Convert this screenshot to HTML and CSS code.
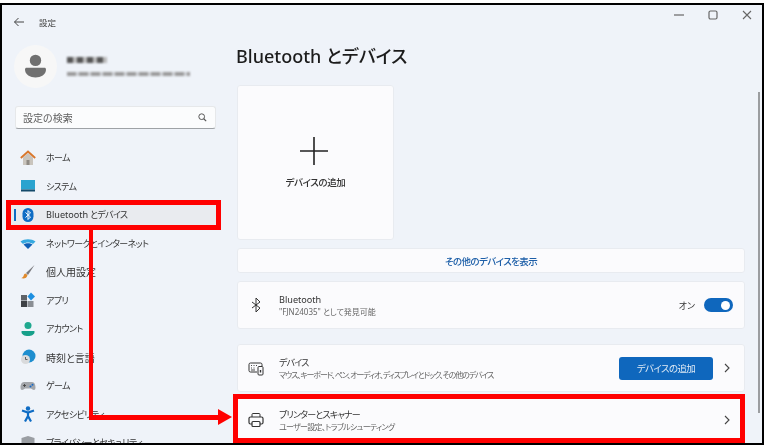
FILE: index.html
```html
<!DOCTYPE html>
<html lang="ja">
<head>
    <meta charset="UTF-8">
    <meta name="viewport" content="width=device-width, initial-scale=1.0">
    <title>設定</title>
    <link rel="stylesheet" href="styles.css">
</head>
<body>
    <div class="window">
        <div class="titlebar">
            <svg class="back" width="12" height="12" viewBox="0 0 12 12"><path d="M11 6H1.500M5.500 2 1.500 6l4 4" fill="none" stroke="#444" stroke-width="1"/></svg>
            <span class="app-name">設定</span>
            <div class="controls">
                <svg width="12" height="12" viewBox="0 0 12 12"><path d="M1 6h10" stroke="#666" stroke-width="1.200"/></svg>
                <svg width="12" height="12" viewBox="0 0 12 12"><rect x="2" y="2" width="8" height="8" rx="1.500" fill="none" stroke="#666" stroke-width="1.200"/></svg>
                <svg width="12" height="12" viewBox="0 0 12 12"><path d="M2 2l8 8M10 2l-8 8" stroke="#666" stroke-width="1.100"/></svg>
            </div>
        </div>
        <div class="content">
            <aside class="sidebar">
                <div class="profile">
                    <div class="avatar">
                        <svg width="24" height="28" viewBox="0 0 24 28"><circle cx="12" cy="7" r="6.500" fill="#707070"/><path d="M1 15.500h22c0 0 1 1 1 2 0 6-6 9-12 9S0 23.500 0 17.500c0-1 1-2 1-2z" fill="#707070"/></svg>
                    </div>
                    <div class="account">
                        <div class="blur-name"></div>
                        <div class="blur-mail"></div>
                    </div>
                </div>
                <div class="search">
                    <span>設定の検索</span>
                    <svg width="9" height="9" viewBox="0 0 11 11"><circle cx="4.500" cy="4.500" r="3.500" fill="none" stroke="#555" stroke-width="1.200"/><path d="M7 7l3 3" stroke="#555" stroke-width="1.400"/></svg>
                </div>
                <nav class="nav">
                    <div class="nav-item">
                        <svg width="16" height="16" viewBox="0 0 16 16"><path d="M3 7.500 8 3l5 4.500V15H3z" fill="#c9c4bd"/><rect x="6.500" y="10" width="3" height="5" fill="#8f8a84"/><path d="M.8 8 8 1.500 15.200 8" fill="none" stroke="#d9762b" stroke-width="1.800"/></svg>
                        <span>ホーム</span>
                    </div>
                    <div class="nav-item">
                        <svg width="16" height="16" viewBox="0 0 16 16"><rect x="1" y="2" width="14" height="9.500" fill="#2aa3cf"/><rect x="1" y="11.500" width="14" height="2" fill="#134a6b"/></svg>
                        <span>システム</span>
                    </div>
                    <div class="nav-item selected">
                        <svg width="16" height="16" viewBox="0 0 16 16"><rect x="2.500" y="1" width="11" height="14" rx="5.500" fill="#0f6cc4"/><path d="M5.500 5.500l5 4.500L8 12.500v-9L10.500 6l-5 4.500" fill="none" stroke="#fff" stroke-width="1"/></svg>
                        <span><span class="latin">Bluetooth</span> とデバイス</span>
                    </div>
                    <div class="nav-item">
                        <svg width="16" height="16" viewBox="0 0 16 16"><path d="M.5 6.500C4.500 3.500 11.500 3.500 15.500 6.500L13 9C10 7 6 7 3 9z" fill="#35a9e0"/><path d="M3.500 9.500C6 7.700 10 7.700 12.500 9.500L8 14z" fill="#0f5fb5"/></svg>
                        <span>ネットワークとインターネット</span>
                    </div>
                    <div class="nav-item">
                        <svg width="16" height="16" viewBox="0 0 16 16"><path d="M14.500 1 6 9l2 2z" fill="#7b7b80"/><path d="M5.500 9.500c-2 .5-1.500 2.500-2.500 3.500-.5.500-1.500 1-2 1 2.500 1 6 .5 6.500-3z" fill="#e08a2c"/></svg>
                        <span class="kanji">個人用設定</span>
                    </div>
                    <div class="nav-item">
                        <svg width="16" height="16" viewBox="0 0 16 16"><rect x="1" y="3" width="6" height="5.500" fill="#5f6368"/><rect x="1" y="9" width="6" height="6" fill="#3d4045"/><rect x="7.500" y="9" width="6" height="6" fill="#8a8e94"/><path d="M11 .5 15 4.500 11 8.500 7.500 4.500z" fill="#1d8fe0"/></svg>
                        <span>アプリ</span>
                    </div>
                    <div class="nav-item">
                        <svg width="16" height="16" viewBox="0 0 16 16"><circle cx="8" cy="4.500" r="3.500" fill="#1fa88f"/><path d="M2 10h12c.5 0 .5.500.5 1 0 2.500-3 4-6.500 4s-6.500-1.500-6.500-4c0-.5 0-1 .500-1z" fill="#17a08a"/></svg>
                        <span>アカウント</span>
                    </div>
                    <div class="nav-item">
                        <svg width="16" height="16" viewBox="0 0 16 16"><circle cx="9" cy="7" r="6.500" fill="#1e8ecf"/><circle cx="5.500" cy="10.500" r="4.500" fill="#d9dadc"/><path d="M5.500 8v2.500h2" fill="none" stroke="#555" stroke-width=".9"/></svg>
                        <span class="kanji">時刻と言語</span>
                    </div>
                    <div class="nav-item">
                        <svg width="16" height="16" viewBox="0 0 16 16"><path d="M4 4h8c2.500 0 3.500 3 3.500 5.500S14 12.500 12.500 11.500L11 10.500H5L3.500 11.500C2 12.500.5 12 .5 9.500S1.500 4 4 4z" fill="#a3a6ab"/><path d="M3 7.500h3M4.500 6v3" stroke="#444" stroke-width=".9"/><circle cx="10.500" cy="8.500" r="1" fill="#1668c7"/><circle cx="12.500" cy="6.800" r="1" fill="#1668c7"/></svg>
                        <span>ゲーム</span>
                    </div>
                    <div class="nav-item">
                        <svg width="16" height="16" viewBox="0 0 16 16"><circle cx="8" cy="2.500" r="2.200" fill="#0f6cc4"/><path d="M2 4.500 8 6.500l6-2M8 6.500V10M8 10l-3 5.500M8 10l3 5.500" fill="none" stroke="#0f6cc4" stroke-width="2.200"/></svg>
                        <span>アクセシビリティ</span>
                    </div>
                    <div class="nav-item">
                        <svg width="16" height="16" viewBox="0 0 16 16"><path d="M8 1 14.500 3v5c0 4-3 6.500-6.500 7.500C4.500 14.500 1.500 12 1.500 8V3z" fill="#9a9ea3"/></svg>
                        <span>プライバシーとセキュリティ</span>
                    </div>
                </nav>
            </aside>
            <main class="main">
                <h1>Bluetooth とデバイス</h1>
                <div class="card add-card">
                    <svg width="30" height="30" viewBox="0 0 30 30"><path d="M15 1v28M1 15h28" stroke="#222" stroke-width="1.600"/></svg>
                    <span>デバイスの追加</span>
                </div>
                <div class="card link-row">その他のデバイスを表示</div>
                <div class="card row bluetooth">
                    <svg class="row-icon" width="16" height="16" viewBox="0 0 16 16"><path d="M4 5l8 6-4 4V1l4 4-8 6" fill="none" stroke="#333" stroke-width="1"/></svg>
                    <div class="row-text">
                        <div class="row-title latin">Bluetooth</div>
                        <div class="row-sub">"FJN24035" として発見可能</div>
                    </div>
                    <span class="toggle-label">オン</span>
                    <div class="toggle"><div class="knob"></div></div>
                </div>
                <div class="card row devices">
                    <svg class="row-icon" width="16" height="16" viewBox="0 0 16 16"><path d="M9 12H2.500A1.500 1.500 0 0 1 1 10.500v-6A1.500 1.500 0 0 1 2.500 3h10A1.500 1.500 0 0 1 14 4.500V6" fill="none" stroke="#333"/><path d="M3 5.500h1M5.500 5.500h1M8 5.500h1M3 8h1M5.500 8h1M3 10h4" stroke="#333" stroke-width=".9"/><rect x="10" y="6.500" width="5" height="8.500" rx="1" fill="none" stroke="#333"/><rect x="11.800" y="10" width="1.400" height="2.500" fill="#333"/></svg>
                    <div class="row-text">
                        <div class="row-title">デバイス</div>
                        <div class="row-sub">マウス、キーボード、ペン、オーディオ、ディスプレイとドック、その他のデバイス</div>
                    </div>
                    <div class="add-button">デバイスの追加</div>
                    <svg class="chevron" width="8" height="10" viewBox="0 0 8 10"><path d="M2 1l4 4-4 4" fill="none" stroke="#444" stroke-width="1.100"/></svg>
                </div>
                <div class="card row printers">
                    <svg class="row-icon" width="16" height="16" viewBox="0 0 16 16"><path d="M4 5V2.500A1 1 0 0 1 5 1.500h6a1 1 0 0 1 1 1V5" fill="none" stroke="#333"/><path d="M4 12H2.500A1.500 1.500 0 0 1 1 10.500v-4A1.500 1.500 0 0 1 2.500 5h11A1.500 1.500 0 0 1 15 6.500v4a1.500 1.500 0 0 1-1.500 1.500H12" fill="none" stroke="#333" stroke-width="1.200"/><rect x="4" y="9.500" width="8" height="5" rx="1" fill="none" stroke="#333" stroke-width="1.200"/></svg>
                    <div class="row-text">
                        <div class="row-title">プリンターとスキャナー</div>
                        <div class="row-sub">ユーザー設定、トラブルシューティング</div>
                    </div>
                    <svg class="chevron" width="8" height="10" viewBox="0 0 8 10"><path d="M2 1l4 4-4 4" fill="none" stroke="#444" stroke-width="1.100"/></svg>
                </div>
            </main>
        </div>
        <div class="scrollbar"></div>
    </div>

    <!-- red callouts drawn on top of the screenshot -->
    <div class="mark mark-nav"></div>
    <div class="mark mark-printer"></div>
    <div class="line line-v"></div>
    <div class="line line-h"></div>
    <div class="arrow"></div>
</body>
</html>
```
FILE: styles.css
```css
* {
    box-sizing: border-box;
}

html, body {
    height: 100%;
}

body {
    margin: 0;
    background-color: #fff;
    font-family: "Noto Sans", "Noto Sans CJK JP", sans-serif;
    font-feature-settings: "palt";
    color: #222;
    overflow: hidden;
    position: relative;
}

.window {
    position: relative;
    width: 764px;
    height: 442px;
    margin-top: 3px;
    border: 2px solid #000;
    background-color: #eff3f9;
    overflow: hidden;
}

.titlebar {
    display: flex;
    align-items: center;
    height: 30px;
    padding-top: 4px;
    padding-left: 11px;
    font-size: 8.500px;
    color: #444;
    filter: blur(.3px);
}

.back {
    margin-right: 14px;
}

.controls {
    display: flex;
    align-self: flex-start;
    gap: 22px;
    margin-left: auto;
    margin-right: 9px;
}

.content {
    display: flex;
    height: 406px;
    filter: blur(.3px);
}

.sidebar {
    width: 234px;
    flex-shrink: 0;
}

.profile {
    display: flex;
    align-items: center;
    padding-top: 10px;
    padding-left: 12px;
}

.avatar {
    display: flex;
    align-items: center;
    justify-content: center;
    width: 43px;
    height: 43px;
    border-radius: 50%;
    background-color: #f7f7f7;
}

.avatar svg {
    width: 21px;
    height: 25px;
}

.account {
    margin-left: 10px;
}

.blur-name {
    width: 40px;
    height: 6px;
    background: repeating-linear-gradient(90deg, #555 0 6px, #bbb 6px 10px);
    filter: blur(1px);
}

.blur-mail {
    width: 123px;
    height: 4px;
    margin-top: 9px;
    background: repeating-linear-gradient(90deg, #9a9a9a 0 9px, #cfd2d6 9px 12px);
    filter: blur(1px);
}

.search {
    display: flex;
    align-items: center;
    justify-content: space-between;
    width: 201px;
    height: 23px;
    margin: 18px 0 0 13px;
    padding: 0 8px 0 7px;
    background-color: #fbfcfd;
    border: 1px solid #e6e8ea;
    border-bottom-color: #9ea2a6;
    border-radius: 3px;
    font-size: 10px;
    color: #5e5e5e;
}

.nav {
    margin-top: 14.500px;
    margin-left: 8px;
    width: 207px;
}

.nav-item {
    position: relative;
    display: flex;
    align-items: center;
    height: 28.500px;
    padding-left: 10px;
    font-size: 9px;
    letter-spacing: -.6px;
    color: #333;
    white-space: nowrap;
}

.nav-item svg {
    margin-right: 10px;
    flex-shrink: 0;
}

.nav-item .latin {
    font-size: 9.100px;
    letter-spacing: 0;
}

.nav-item .kanji {
    font-size: 10px;
    letter-spacing: 0;
}

.selected {
    background-color: #e9ebef;
    border-radius: 3px;
}

.selected::before {
    content: "";
    position: absolute;
    left: 4px;
    top: 8px;
    width: 2px;
    height: 12px;
    background-color: #0f6cc4;
}

.main {
    flex: 1;
    padding-left: 1px;
}

h1 {
    margin: 0 0 0 -1px;
    height: 50px;
    padding-top: 6px;
    font-size: 18px;
    line-height: 30px;
    font-weight: 500;
    color: #1c1c1c;
}

.card {
    width: 508px;
    background-color: #fbfbfd;
    border: 1px solid #e8ebf0;
    border-radius: 3px;
}

.add-card {
    display: flex;
    flex-direction: column;
    align-items: center;
    justify-content: center;
    width: 157px;
    height: 155px;
    font-size: 9.500px;
    letter-spacing: -.4px;
    font-weight: 500;
    color: #333;
}

.add-card svg {
    margin-bottom: 9px;
    margin-left: -3px;
}

.link-row {
    display: flex;
    align-items: center;
    justify-content: center;
    height: 25px;
    margin-top: 8px;
    font-size: 9.500px;
    letter-spacing: -.6px;
    font-weight: 500;
    color: #1d5fa8;
}

.row {
    display: flex;
    align-items: center;
    height: 48px;
    margin-top: 8px;
    padding-right: 13px;
}

.bluetooth {
    padding-right: 11px;
}

.devices {
    margin-top: 15px;
}

.printers {
    margin-top: 4px;
}

.row-icon {
    margin-left: 10px;
    margin-right: 15px;
    flex-shrink: 0;
}

.row-text {
    flex: 1;
}

.row-title {
    font-size: 9px;
    letter-spacing: -.8px;
    line-height: 13px;
    color: #333;
}

.row-title.latin {
    font-size: 9.100px;
    letter-spacing: 0;
}

.row-sub {
    font-size: 8px;
    letter-spacing: -.7px;
    line-height: 12px;
    color: #666;
}

.bluetooth .row-sub {
    letter-spacing: 0;
}

.devices .row-sub {
    letter-spacing: -1.100px;
}

.toggle-label {
    margin-right: 9px;
    font-size: 9px;
    color: #333;
}

.toggle {
    display: flex;
    align-items: center;
    justify-content: flex-end;
    width: 29px;
    height: 14px;
    padding-right: 3px;
    border-radius: 7px;
    background-color: #0f67bd;
}

.knob {
    width: 9px;
    height: 9px;
    border-radius: 50%;
    background-color: #fff;
}

.add-button {
    display: flex;
    align-items: center;
    justify-content: center;
    width: 94px;
    height: 23px;
    margin-right: 10px;
    border-radius: 3px;
    background-color: #0f67bd;
    font-size: 9.500px;
    letter-spacing: -.6px;
    color: #dfeaf5;
}

.scrollbar {
    position: absolute;
    right: 2px;
    top: 87px;
    bottom: 30px;
    width: 2px;
    background-color: #9b9da0;
}

.mark {
    position: absolute;
    border: 5px solid #f00;
}

.mark-nav {
    left: 6px;
    top: 200px;
    width: 215px;
    height: 30px;
}

.mark-printer {
    left: 233px;
    top: 394px;
    width: 512px;
    height: 49px;
}

.line {
    position: absolute;
    background-color: #f00;
}

.line-v {
    left: 89px;
    top: 230px;
    width: 4px;
    height: 190px;
}

.line-h {
    left: 89px;
    top: 415px;
    width: 131px;
    height: 5px;
}

.arrow {
    position: absolute;
    left: 218px;
    top: 409px;
    width: 0;
    height: 0;
    border-top: 8.500px solid transparent;
    border-bottom: 8.500px solid transparent;
    border-left: 14px solid #f00;
}
```
